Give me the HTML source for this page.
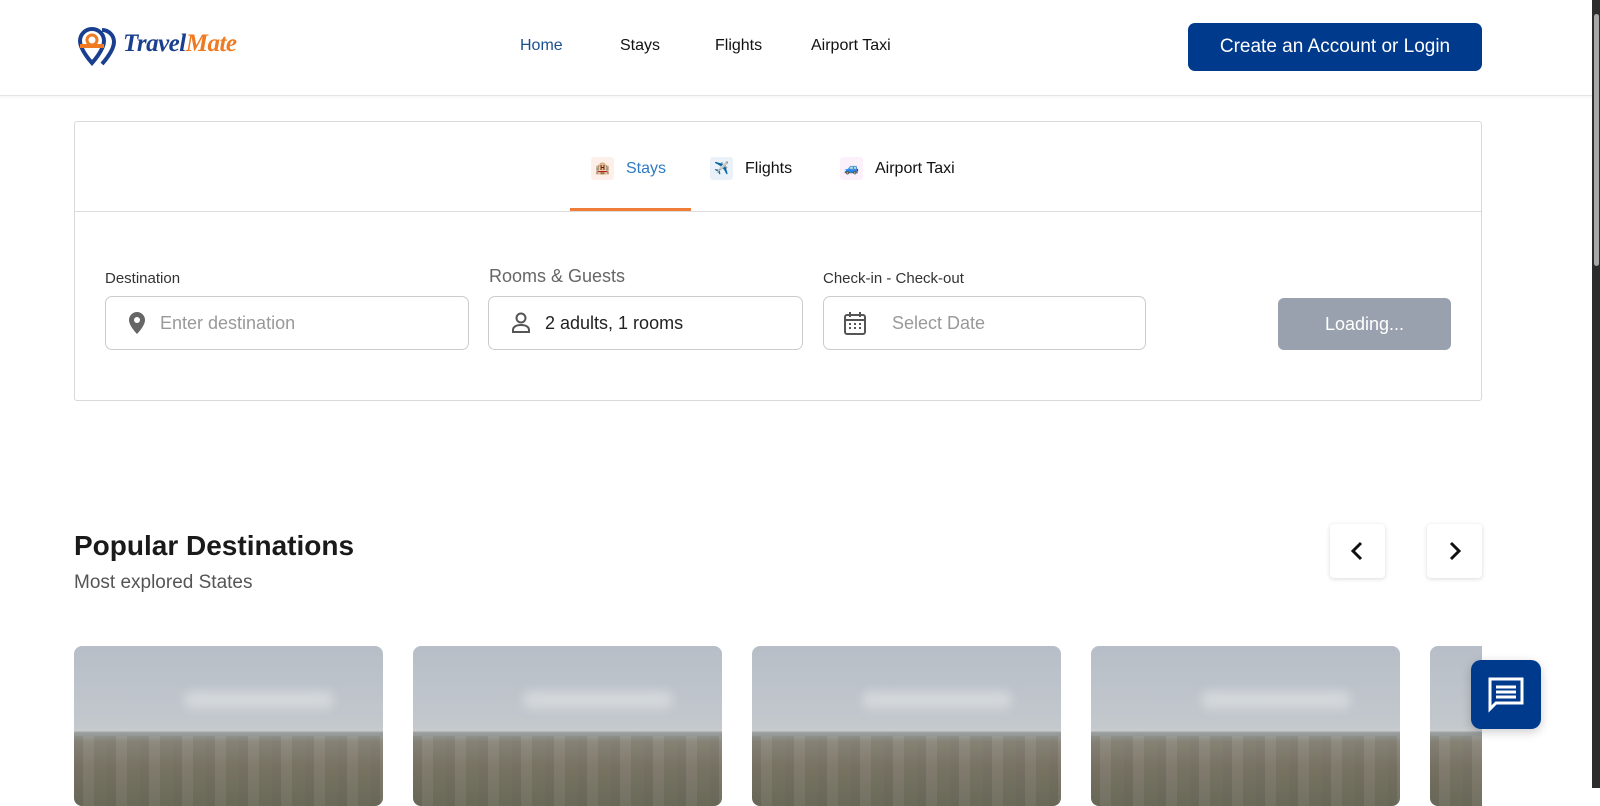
<!DOCTYPE html>
<html><head><meta charset="utf-8"><style>
*{box-sizing:border-box;margin:0;padding:0}
body{width:1600px;height:788px;overflow:hidden;background:#fff;font-family:"Liberation Sans",Arial,sans-serif;position:relative;color:#111}
.hdr{position:absolute;left:0;top:0;width:1592px;height:96px;background:#fff;border-bottom:1px solid #e6e6e6;box-shadow:0 1px 3px rgba(0,0,0,.05)}
.nav a{position:absolute;top:37px;font-size:16px;color:#111;text-decoration:none}
.btn{position:absolute;left:1188px;top:23px;width:294px;height:48px;background:#003a8c;border-radius:7px;color:#fff;font-size:19px;text-align:center;line-height:48px}
.card{position:absolute;left:74px;top:121px;width:1408px;height:280px;border:1px solid #d9d9d9;border-radius:3px}
.tabline{position:absolute;left:0;top:89px;width:100%;border-top:1px solid #ddd}
.tab{position:absolute;top:35px;font-size:16px;display:flex;align-items:center}
.tab i{display:inline-block;width:23px;height:23px;border-radius:3px;margin-right:12px;font-style:normal;font-size:12px;text-align:center;line-height:23px}
.lbl{position:absolute;font-size:15px;color:#333}
.inp{position:absolute;top:174px;height:54px;border:1px solid #ccc;border-radius:7px;font-size:18px;display:flex;align-items:center}
.load{position:absolute;left:1203px;top:176px;width:173px;height:52px;background:#98a1ad;border-radius:6px;color:#fff;font-size:18px;text-align:center;line-height:52px}
.arr{position:absolute;top:524px;width:55px;height:54px;background:#fff;border-radius:4px;box-shadow:0 1px 5px rgba(0,0,0,.15)}
.img{position:absolute;top:646px;width:309px;height:160px;border-radius:8px;overflow:hidden;background:linear-gradient(#b7bec7 0%,#c3c8cd 50%,#c8cbcd 53%,#9aa0a0 54%,#8a857a 60%,#7b7566 75%,#6b6a5a 100%)}
.img:before{content:"";position:absolute;left:0;right:0;top:90px;height:70px;background:repeating-linear-gradient(90deg,rgba(60,60,50,.08) 0 9px,rgba(200,195,185,.08) 9px 20px,rgba(90,100,70,.1) 20px 33px)}
.img:after{content:"";position:absolute;left:110px;top:45px;width:150px;height:18px;border-radius:10px;background:rgba(225,228,230,.6);filter:blur(5px)}
</style></head><body>
<div class="hdr">
 <svg style="position:absolute;left:78px;top:27px" width="42" height="40" viewBox="0 0 42 40">
  <path d="M14 2a12 12 0 0 0-12 12c0 9 12 22 12 22s12-13 12-22A12 12 0 0 0 14 2z" fill="none" stroke="#1a3f8f" stroke-width="4"/>
  <path d="M24 3a12 12 0 0 1 12 12c0 9-12 22-12 22" fill="none" stroke="#1a3f8f" stroke-width="4"/>
  <path d="M2 19h24" stroke="#f07a22" stroke-width="4"/><circle cx="14" cy="13" r="5" fill="none" stroke="#f07a22" stroke-width="3"/>
 </svg>
 <div style="position:absolute;left:123px;top:30px;font-size:25px;font-weight:bold;font-style:italic;font-family:'Liberation Serif',serif;letter-spacing:-.5px"><span style="color:#1a3f8f">Travel</span><span style="color:#f07a22">Mate</span></div>
 <div class="nav"><a style="left:520px;color:#1a4f8f">Home</a><a style="left:620px">Stays</a><a style="left:715px">Flights</a><a style="left:811px">Airport Taxi</a></div>
 <div class="btn">Create an Account or Login</div>
</div>
<div class="card">
 <div class="tab" style="left:516px;color:#2f7ac4"><i style="background:#fdf0ea">🏨</i>Stays</div>
 <div class="tab" style="left:635px"><i style="background:#eaf1f8">✈️</i>Flights</div>
 <div class="tab" style="left:765px"><i style="background:#fcf0fb">🚙</i>Airport Taxi</div>
 <div style="position:absolute;left:495px;top:86px;width:121px;height:3px;background:#ef7d37"></div>
 <div class="tabline"></div>
 <div class="lbl" style="left:30px;top:148px">Destination</div>
 <div class="lbl" style="left:414px;top:144px;font-size:18px;color:#666">Rooms &amp; Guests</div>
 <div class="lbl" style="left:748px;top:148px">Check-in - Check-out</div>
 <div class="inp" style="left:30px;width:364px;color:#999"><svg style="margin:0 14px 0 22px" width="18" height="24" viewBox="0 0 18 24"><path d="M9 1a8 8 0 0 0-8 8c0 6 8 14 8 14s8-8 8-14a8 8 0 0 0-8-8z" fill="#666"/><circle cx="9" cy="9" r="3" fill="#fff"/></svg>Enter destination</div>
 <div class="inp" style="left:413px;width:315px;color:#222"><svg style="margin:0 14px 0 22px" width="20" height="22" viewBox="0 0 20 22"><circle cx="10" cy="6" r="4.5" fill="none" stroke="#555" stroke-width="2"/><path d="M2 20v-2c0-3 3-5 8-5s8 2 8 5v2z" fill="none" stroke="#555" stroke-width="2"/></svg>2 adults, 1 rooms</div>
 <div class="inp" style="left:748px;width:323px;color:#999"><svg style="margin:0 26px 0 20px" width="22" height="24" viewBox="0 0 22 24"><rect x="1" y="4" width="20" height="19" rx="2" fill="none" stroke="#555" stroke-width="2"/><path d="M1 9h20M6 1v5M16 1v5" stroke="#555" stroke-width="2"/><path d="M5 13h2M10 13h2M15 13h2M5 17h2M10 17h2M15 17h2" stroke="#555" stroke-width="2"/></svg>Select Date</div>
 <div class="load">Loading...</div>
</div>
<div style="position:absolute;left:74px;top:530px;font-size:28px;font-weight:bold;color:#1a1a1a">Popular Destinations</div>
<div style="position:absolute;left:74px;top:572px;font-size:19px;color:#555">Most explored States</div>
<div class="arr" style="left:1330px"><svg width="55" height="54"><path d="M31 19l-8 8 8 8" fill="none" stroke="#111" stroke-width="3"/></svg></div>
<div class="arr" style="left:1427px"><svg width="55" height="54"><path d="M24 19l8 8-8 8" fill="none" stroke="#111" stroke-width="3"/></svg></div>
<div class="img" style="left:74px"></div>
<div class="img" style="left:413px"></div>
<div class="img" style="left:752px"></div>
<div class="img" style="left:1091px"></div>
<div style="position:absolute;left:1430px;top:646px;width:52px;height:160px;overflow:hidden"><div class="img" style="left:0;top:0"></div></div>
<div style="position:absolute;left:1471px;top:660px;width:70px;height:69px;background:#003a8c;border-radius:10px;box-shadow:0 3px 10px rgba(0,0,0,.2)">
 <svg width="70" height="69" viewBox="0 0 70 69"><path d="M19 19h32v24H25l-6 6z" fill="none" stroke="#fff" stroke-width="3"/><path d="M25 27h20M25 32h20M25 37h20" stroke="#fff" stroke-width="3"/></svg></div>
<div style="position:absolute;left:1592px;top:0;width:8px;height:788px;background:#2c2c2c"><div style="position:absolute;left:2px;top:14px;width:5px;height:252px;background:#a8a8a8;border-radius:3px"></div></div>
</body></html>
